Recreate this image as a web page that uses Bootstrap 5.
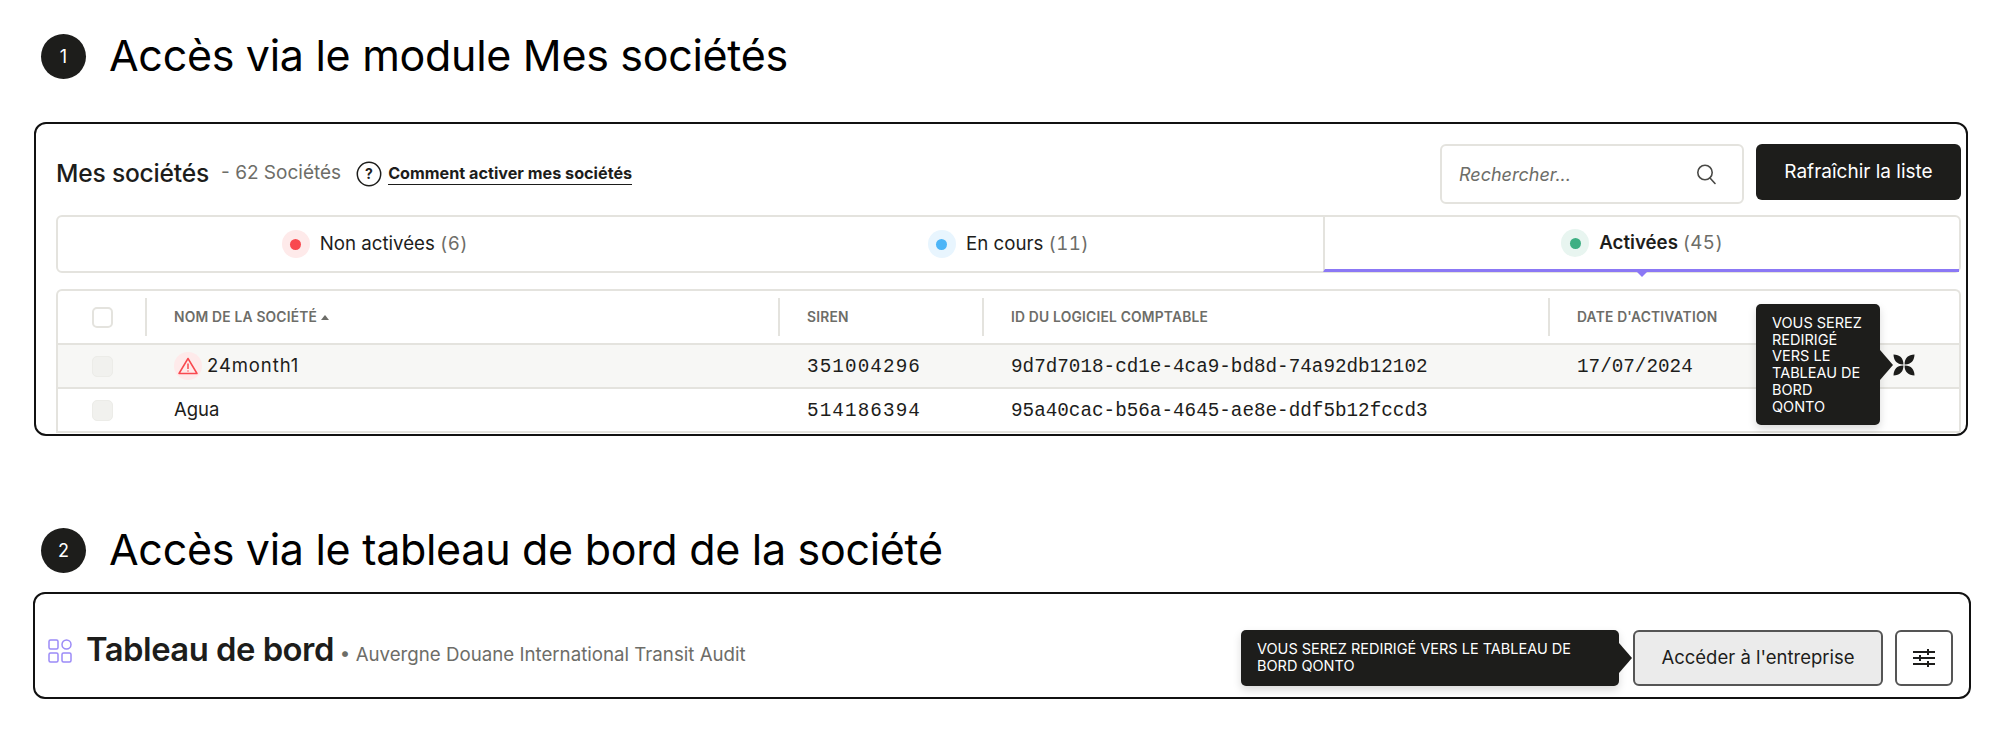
<!DOCTYPE html>
<html lang="fr">

<head>
    <meta charset="UTF-8">
    <meta name="viewport" content="width=device-width, initial-scale=1.0">
    <title>Accès au tableau de bord Qonto</title>
    <link href="https://cdn.jsdelivr.net/npm/bootstrap@5.3.0/dist/css/bootstrap.min.css" rel="stylesheet">
    <style>
        body {
            background-color: #fff;
            color: #1d1d1b;
            font-family: Inter, "Liberation Sans", sans-serif;
            padding: 34px 29px 0 34px;
        }

        .step-head {
            height: 45px;
            margin-left: 7px;
            gap: 23px;
        }

        .step-num {
            width: 45px;
            height: 45px;
            background-color: #1d1d1b;
            color: #fff;
            font-size: 18px;
        }

        .step-title {
            font-size: 43px;
            line-height: 45px;
            font-weight: 400;
            color: #000;
            margin: 0 0 2px;
            letter-spacing: -0.3px;
        }

        .frame {
            border: 2px solid #111;
            border-radius: 12px;
            overflow: hidden;
            background-color: #fff;
        }

        .frame-list {
            height: 314px;
            margin-top: 43px;
            margin-bottom: 92px;
            padding: 20px 5px 0 20px;
            margin-right: 3px;
        }

        .frame-dash {
            height: 107px;
            margin-top: 19px;
            margin-left: -1px;
            padding: 36px 16px 0 13px;
        }

        .list-top {
            height: 59px;
            margin-bottom: 12px;
        }

        .list-left {
            height: 59px;
        }

        .list-title {
            font-size: 24.6px;
            font-weight: 500;
            margin: 0;
            letter-spacing: -0.2px;
        }

        .list-count {
            color: #6d6d68;
            font-size: 19px;
            margin-left: 12px;
        }

        .help-icon {
            margin-left: 15px;
        }

        .help-link {
            color: #1d1d1b;
            font-size: 16.2px;
            font-weight: 700;
            text-decoration: none;
            border-bottom: 1.5px solid #1d1d1b;
            margin-left: 6px;
            line-height: 21px;
        }

        .search-box {
            width: 304px;
            height: 60px;
            border: 2px solid #e4e3de;
            border-radius: 6px;
            padding: 0 26px 0 17px;
            margin-right: 12px;
        }

        .search-box input {
            border: 0;
            outline: 0;
            width: 200px;
            font-size: 18px;
            font-style: italic;
            padding: 0;
        }

        .search-box input::placeholder {
            color: #6d6d68;
            opacity: 1;
        }

        .btn-refresh {
            width: 205px;
            height: 56px;
            background-color: #1d1d1b;
            color: #fff;
            font-size: 19px;
            border-radius: 6px;
            border: 0;
            padding: 0;
            align-self: flex-start;
        }

        .tab-bar {
            height: 58px;
            border: 2px solid #e4e3de;
            border-radius: 6px;
            margin-bottom: 16px;
        }

        .tab-item {
            flex: 1 1 0;
            font-size: 18.7px;
            gap: 10px;
            position: relative;
        }

        .tab-item.on {
            font-weight: 600;
            border-left: 2px solid #e4e3de;
            border-bottom: 3px solid #8b78f5;
            margin-bottom: -1px;
            margin-left: -2px;
        }

        .tab-item.on::after {
            content: "";
            position: absolute;
            left: 50%;
            bottom: -8px;
            margin-left: -5px;
            border: 5px solid transparent;
            border-bottom: 0;
            border-top-color: #8b78f5;
        }

        .tab-num {
            color: #6d6d68;
            font-weight: 400;
            font-variant-numeric: tabular-nums;
            letter-spacing: 0.4px;
        }

        .dot-wrap {
            width: 28px;
            height: 28px;
        }

        .dot-inner {
            width: 11px;
            height: 11px;
        }

        .red-wrap { background-color: #feeaea; }
        .red-inner { background-color: #f9494f; }
        .blue-wrap { background-color: #e8f5fe; }
        .blue-inner { background-color: #4db5f7; }
        .green-wrap { background-color: #e8f5f0; }
        .green-inner { background-color: #3eaf83; }

        .data-wrap {
            border: 2px solid #e4e3de;
            border-bottom: 0;
            border-radius: 6px 6px 0 0;
        }

        .data-table {
            table-layout: fixed;
            margin: 0;
            width: 100%;
        }

        .data-table th,
        .data-table td {
            padding: 0;
            vertical-align: middle;
            border-bottom: 2px solid #e4e3de;
            background-color: transparent;
        }

        .data-table tr.hl {
            background-color: #f7f7f5;
        }

        .data-table td {
            height: 44px;
            font-size: 18.5px;
            color: #1d1d1b;
            padding-left: 28px;
        }

        .data-table td.cell-check {
            padding-left: 34px;
        }

        .data-table td.cell-name {
            padding-left: 29px;
        }

        .data-table td.cell-mono {
            font-family: "Liberation Mono", monospace;
            font-size: 19.3px;
            padding-left: 29px;
            padding-top: 2px;
        }

        .data-table td.cell-siren {
            letter-spacing: 1.1px;
        }

        .name-spaced {
            letter-spacing: 0.9px;
        }

        .head-cell {
            height: 38px;
            margin: 7px 0;
            border-left: 2px solid #e4e3de;
            padding-left: 27px;
            font-size: 13.8px;
            font-weight: 600;
            color: #6d6d68;
            letter-spacing: 0.2px;
        }

        .head-check {
            height: 38px;
            margin: 7px 0;
            padding-left: 34px;
        }

        .check-box {
            width: 21px;
            height: 21px;
            border-radius: 5px;
            border: 2px solid #e4e3de;
            background-color: #fff;
        }

        .check-box.off {
            border: 1px solid #ecece8;
            background-color: #f1f1ee;
        }

        .warn-wrap {
            width: 28px;
            height: 28px;
            background-color: #feeaea;
            margin-right: 5px;
        }

        .tip-dark {
            position: absolute;
            background-color: #1d1d1b;
            color: #fff;
            font-size: 14.5px;
            line-height: 16.7px;
            border-radius: 5px;
            text-transform: uppercase;
            box-shadow: 0 4px 8px rgba(0, 0, 0, .15);
            padding: 11px 16px;
        }

        .tip-dark::after {
            content: "";
            position: absolute;
            top: 50%;
            left: 100%;
            margin-top: -15px;
            border-style: solid;
            border-width: 15px 0 15px 13px;
            border-color: transparent transparent transparent #1d1d1b;
        }

        .tip-row {
            left: 1700px;
            top: 15px;
            width: 124px;
            height: 121px;
        }

        .logo-spot {
            position: absolute;
            left: 1837px;
            top: 65px;
        }

        .table-area {
            position: relative;
        }

        .dash-left {
            margin-bottom: 16px;
        }

        .dash-icon {
            margin-right: 14px;
            margin-top: 1px;
        }

        .dash-title {
            font-size: 32.8px;
            font-weight: 600;
            margin: 0;
            letter-spacing: -0.5px;
        }

        .dash-sub {
            color: #6d6d68;
            font-size: 18.7px;
            margin-left: 6px;
            margin-top: 10px;
        }

        .dash-actions {
            gap: 12px;
        }

        .tip-side {
            position: relative;
            width: 378px;
            height: 56px;
            margin-right: 2px;
            line-height: 17px;
            padding: 10px 16px;
        }

        .btn-access {
            width: 250px;
            height: 56px;
            background-color: #ebebeb;
            color: #1d1d1b;
            border: 2px solid #555;
            border-radius: 6px;
            font-size: 18.5px;
            padding: 0;
        }

        .btn-tune {
            width: 58px;
            height: 56px;
            background-color: #fff;
            border: 2px solid #555;
            border-radius: 6px;
            padding: 0;
        }
    </style>
</head>

<body>
    <div class="step-head d-flex align-items-center">
        <span class="step-num rounded-circle d-flex align-items-center justify-content-center flex-shrink-0">1</span>
        <h2 class="step-title">Accès via le module Mes sociétés</h2>
    </div>

    <div class="frame frame-list">
        <div class="list-top d-flex align-items-start justify-content-between">
            <div class="d-flex align-items-center list-left">
                <h3 class="list-title">Mes sociétés</h3>
                <span class="list-count">- 62 Sociétés</span>
                <svg class="help-icon" width="26" height="26" viewBox="0 0 26 26">
                    <circle cx="13" cy="13" r="11.7" fill="none" stroke="#1d1d1b" stroke-width="1.5" />
                    <text x="13" y="18" font-size="14" font-weight="700" text-anchor="middle" fill="#1d1d1b" font-family="Inter">?</text>
                </svg>
                <a class="help-link" href="#">Comment activer mes sociétés</a>
            </div>
            <div class="d-flex">
                <div class="search-box d-flex align-items-center justify-content-between">
                    <input type="text" placeholder="Rechercher...">
                    <svg width="20" height="22" viewBox="0 0 20 22" fill="none" stroke="#4a4a47" stroke-width="1.6">
                        <circle cx="9" cy="9.5" r="7.2" />
                        <path d="M14 15l5 5.5" stroke-linecap="round" />
                    </svg>
                </div>
                <button class="btn btn-refresh" type="button">Rafraîchir la liste</button>
            </div>
        </div>

        <div class="tab-bar d-flex">
            <div class="tab-item d-flex align-items-center justify-content-center">
                <span class="dot-wrap red-wrap rounded-circle d-flex align-items-center justify-content-center"><span class="dot-inner red-inner rounded-circle"></span></span>
                <span>Non activées <span class="tab-num">(6)</span></span>
            </div>
            <div class="tab-item d-flex align-items-center justify-content-center">
                <span class="dot-wrap blue-wrap rounded-circle d-flex align-items-center justify-content-center"><span class="dot-inner blue-inner rounded-circle"></span></span>
                <span>En cours <span class="tab-num">(11)</span></span>
            </div>
            <div class="tab-item on d-flex align-items-center justify-content-center">
                <span class="dot-wrap green-wrap rounded-circle d-flex align-items-center justify-content-center"><span class="dot-inner green-inner rounded-circle"></span></span>
                <span>Activées <span class="tab-num">(45)</span></span>
            </div>
        </div>

        <div class="table-area">
            <div class="data-wrap">
                <table class="table data-table">
                    <colgroup>
                        <col style="width:87px">
                        <col style="width:633px">
                        <col style="width:204px">
                        <col style="width:566px">
                        <col>
                    </colgroup>
                    <thead>
                        <tr>
                            <th><div class="head-check d-flex align-items-center"><span class="check-box d-block"></span></div></th>
                            <th><div class="head-cell d-flex align-items-center">NOM DE LA SOCIÉTÉ
                                <svg class="ms-1" width="8" height="5" viewBox="0 0 8 5"><path d="M4 0l4 5H0z" fill="#6d6d68" /></svg></div></th>
                            <th><div class="head-cell d-flex align-items-center">SIREN</div></th>
                            <th><div class="head-cell d-flex align-items-center">ID DU LOGICIEL COMPTABLE</div></th>
                            <th><div class="head-cell d-flex align-items-center">DATE D'ACTIVATION</div></th>
                        </tr>
                    </thead>
                    <tbody>
                        <tr class="hl">
                            <td class="cell-check"><span class="check-box off d-block"></span></td>
                            <td class="cell-name">
                                <div class="d-flex align-items-center">
                                    <span class="warn-wrap rounded-circle d-flex align-items-center justify-content-center">
                                        <svg width="20" height="18" viewBox="0 0 20 18" fill="none" stroke="#f9494f" stroke-width="1.5" stroke-linejoin="round">
                                            <path d="M10 1.5L19 16.5H1z" />
                                            <path d="M10 6.5v5.5M10 13.6v1" />
                                        </svg>
                                    </span>
                                    <span class="name-spaced">24month1</span>
                                </div>
                            </td>
                            <td class="cell-mono cell-siren">351004296</td>
                            <td class="cell-mono">9d7d7018-cd1e-4ca9-bd8d-74a92db12102</td>
                            <td class="cell-mono">17/07/2024</td>
                        </tr>
                        <tr>
                            <td class="cell-check"><span class="check-box off d-block"></span></td>
                            <td class="cell-name">Agua</td>
                            <td class="cell-mono cell-siren">514186394</td>
                            <td class="cell-mono">95a40cac-b56a-4645-ae8e-ddf5b12fccd3</td>
                            <td></td>
                        </tr>
                    </tbody>
                </table>
            </div>
            <div class="tip-dark tip-row">Vous serez redirigé vers le tableau de bord Qonto</div>
            <svg class="logo-spot" width="22" height="22" viewBox="0 0 22 22" fill="#1d1d1b">
                <path d="M10.4 10.4C4 10.6 .6 6.5 .5 .5 6.5 .6 10.6 4 10.4 10.4z" />
                <path d="M11.6 10.4C11.4 4 15.5 .6 21.5 .5 21.4 6.5 18 10.6 11.6 10.4z" />
                <path d="M10.4 11.6C10.6 18 6.5 21.4 .5 21.5 .6 15.5 4 11.4 10.4 11.6z" />
                <path d="M11.6 11.6C18 11.4 21.4 15.5 21.5 21.5 15.5 21.4 11.4 18 11.6 11.6z" />
            </svg>
        </div>
    </div>

    <div class="step-head d-flex align-items-center">
        <span class="step-num rounded-circle d-flex align-items-center justify-content-center flex-shrink-0">2</span>
        <h2 class="step-title">Accès via le tableau de bord de la société</h2>
    </div>

    <div class="frame frame-dash">
        <div class="d-flex align-items-center justify-content-between">
            <div class="d-flex align-items-center dash-left">
                <svg class="dash-icon" width="24" height="24" viewBox="0 0 24 24" fill="none" stroke="#9b8af7" stroke-width="1.5">
                    <rect x="1" y="1" width="9" height="9" rx="1.5" />
                    <circle cx="18.5" cy="5.5" r="4.5" />
                    <rect x="1" y="14" width="9" height="9" rx="1.5" />
                    <rect x="14" y="14" width="9" height="9" rx="1.5" />
                </svg>
                <h3 class="dash-title">Tableau de bord</h3>
                <span class="dash-sub">• Auvergne Douane International Transit Audit</span>
            </div>
            <div class="dash-actions d-flex align-items-center">
                <div class="tip-dark tip-side">Vous serez redirigé vers le tableau de bord Qonto</div>
                <button class="btn btn-access" type="button">Accéder à l'entreprise</button>
                <button class="btn btn-tune d-flex align-items-center justify-content-center" type="button">
                    <svg width="22" height="20" viewBox="0 0 22 20" stroke="#1d1d1b" stroke-width="2" fill="none">
                        <path d="M0 4h22M0 10h22M0 16h22" />
                        <path d="M15 1v6M7 7v6M15 13v6" />
                    </svg>
                </button>
            </div>
        </div>
    </div>

    <script src="https://cdn.jsdelivr.net/npm/bootstrap@5.3.0/dist/js/bootstrap.bundle.min.js"></script>
</body>

</html>
